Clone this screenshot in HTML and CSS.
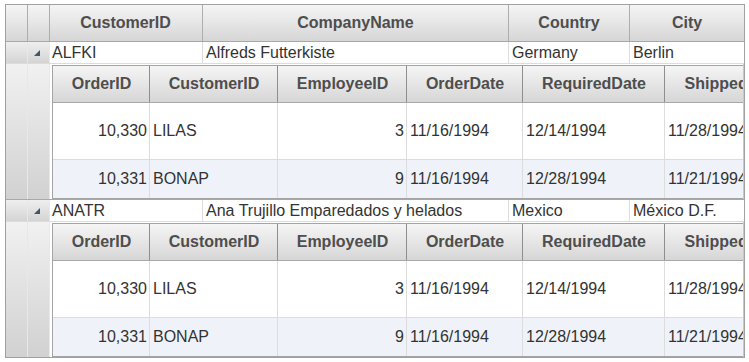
FILE: index.html
```html
<!DOCTYPE html>
<html lang="en">
<head>
    <meta charset="UTF-8">
    <title>Customers and Orders</title>
    <link rel="stylesheet" href="styles.css">
</head>
<body>
    <div class="grid">
        <div class="row head">
            <div class="ind"></div>
            <div class="ind"></div>
            <div class="cell c-cust">CustomerID</div>
            <div class="cell c-comp">CompanyName</div>
            <div class="cell c-country">Country</div>
            <div class="cell c-city">City</div>
        </div>

        <div class="row group">
            <div class="ind"></div>
            <div class="ind"><svg class="expander" width="7" height="6" viewBox="0 0 7 6"><polygon points="6,0 6,6 0,6" fill="#3b5870"/></svg></div>
            <div class="cell c-cust">ALFKI</div>
            <div class="cell c-comp">Alfreds Futterkiste</div>
            <div class="cell c-country">Germany</div>
            <div class="cell c-city">Berlin</div>
        </div>
        <div class="row detail">
            <div class="ind"></div>
            <div class="ind"></div>
            <div class="nest-wrap">
                <div class="nested">
                    <div class="nrow nhead">
                        <div class="ncell n-order">OrderID</div>
                        <div class="ncell n-cust">CustomerID</div>
                        <div class="ncell n-emp">EmployeeID</div>
                        <div class="ncell n-odate">OrderDate</div>
                        <div class="ncell n-rdate">RequiredDate</div>
                        <div class="ncell n-sdate">ShippedDate</div>
                    </div>
                    <div class="nrow tall">
                        <div class="ncell n-order num">10,330</div>
                        <div class="ncell n-cust">LILAS</div>
                        <div class="ncell n-emp num">3</div>
                        <div class="ncell n-odate">11/16/1994</div>
                        <div class="ncell n-rdate">12/14/1994</div>
                        <div class="ncell n-sdate">11/28/1994</div>
                    </div>
                    <div class="nrow alt">
                        <div class="ncell n-order num">10,331</div>
                        <div class="ncell n-cust">BONAP</div>
                        <div class="ncell n-emp num">9</div>
                        <div class="ncell n-odate">11/16/1994</div>
                        <div class="ncell n-rdate">12/28/1994</div>
                        <div class="ncell n-sdate">11/21/1994</div>
                    </div>
                </div>
            </div>
        </div>

        <div class="row group">
            <div class="ind"></div>
            <div class="ind"><svg class="expander" width="7" height="6" viewBox="0 0 7 6"><polygon points="6,0 6,6 0,6" fill="#3b5870"/></svg></div>
            <div class="cell c-cust">ANATR</div>
            <div class="cell c-comp">Ana Trujillo Emparedados y helados</div>
            <div class="cell c-country">Mexico</div>
            <div class="cell c-city">México D.F.</div>
        </div>
        <div class="row detail">
            <div class="ind"></div>
            <div class="ind"></div>
            <div class="nest-wrap">
                <div class="nested">
                    <div class="nrow nhead">
                        <div class="ncell n-order">OrderID</div>
                        <div class="ncell n-cust">CustomerID</div>
                        <div class="ncell n-emp">EmployeeID</div>
                        <div class="ncell n-odate">OrderDate</div>
                        <div class="ncell n-rdate">RequiredDate</div>
                        <div class="ncell n-sdate">ShippedDate</div>
                    </div>
                    <div class="nrow tall">
                        <div class="ncell n-order num">10,330</div>
                        <div class="ncell n-cust">LILAS</div>
                        <div class="ncell n-emp num">3</div>
                        <div class="ncell n-odate">11/16/1994</div>
                        <div class="ncell n-rdate">12/14/1994</div>
                        <div class="ncell n-sdate">11/28/1994</div>
                    </div>
                    <div class="nrow alt">
                        <div class="ncell n-order num">10,331</div>
                        <div class="ncell n-cust">BONAP</div>
                        <div class="ncell n-emp num">9</div>
                        <div class="ncell n-odate">11/16/1994</div>
                        <div class="ncell n-rdate">12/28/1994</div>
                        <div class="ncell n-sdate">11/21/1994</div>
                    </div>
                </div>
            </div>
        </div>
    </div>
</body>
</html>
```

FILE: styles.css
```css
* {
    margin: 0;
    padding: 0;
    box-sizing: border-box;
}

body {
    font-family: "Liberation Sans", Arial, sans-serif;
    font-size: 16px;
    color: #333;
    background: white;
}

.grid {
    margin: 4px 0 0 5px;
    width: 740px;
    height: 354px;
    border: 1px solid #a0a0a0;
    overflow: hidden;
}

.row {
    display: flex;
}

.ind {
    flex: none;
    width: 22px;
    border-right: 1px solid #e8e8e8;
}

.cell {
    flex: none;
    border-right: 1px solid #dcdcdc;
    padding: 0 3px;
    white-space: nowrap;
    overflow: hidden;
}

.c-cust { width: 153px; padding-left: 2px; }
.c-comp { width: 306px; }
.c-country { width: 121px; }
.c-city { flex: 1; border-right: none; }

/* top header */
.head {
    height: 37px;
    border-bottom: 1px solid #a8a8a8;
}

.head .ind,
.head .cell {
    background: linear-gradient(#f5f5f5, #d6d6d6);
    border-right: 1px solid #adadad;
}

.head .cell {
    display: flex;
    align-items: center;
    justify-content: center;
    font-weight: bold;
    color: #4e4e4e;
}

.head .c-city {
    border-right: none;
}

/* group rows */
.group {
    height: 22px;
    border-bottom: 1px solid #dcdcdc;
    line-height: 21px;
}

.group .ind {
    background: linear-gradient(#efefef, #d4d4d4);
}

.expander {
    display: block;
    margin: 8px 0 0 6px;
}

/* detail rows holding the nested orders */
.detail {
    height: 136px;
    border-bottom: 1px solid #a8a8a8;
}

.detail .ind {
    background: linear-gradient(#f1f1f1, #d1d1d1);
}

.nest-wrap {
    flex: 1;
    overflow: hidden;
    padding: 1px 0 0 2px;
    border-right: 1px solid #c8c8c8;
}

.nested {
    width: 800px;
    border: 1px solid #a4a4a4;
    border-right: none;
}

.nrow {
    display: flex;
    height: 38px;
    align-items: stretch;
}

.nrow.tall {
    height: 57px;
    border-bottom: 1px solid #dcdcdc;
}

.nrow.alt {
    background: #eff3f9;
}

.ncell {
    flex: none;
    display: flex;
    align-items: center;
    padding: 0 2px 0 3px;
    border-right: 1px solid #dcdcdc;
    white-space: nowrap;
}

.ncell.num {
    justify-content: flex-end;
}

.n-order { width: 97px; }
.n-cust { width: 128px; }
.n-emp { width: 129px; }
.n-odate { width: 116px; }
.n-rdate { width: 142px; }
.n-sdate { width: 137px; }

.nhead {
    height: 37px;
    border-bottom: 1px solid #a8a8a8;
}

.nhead .ncell {
    justify-content: center;
    background: linear-gradient(#f5f5f5, #d6d6d6);
    border-right: 1px solid #8e8e8e;
    font-weight: bold;
    color: #4e4e4e;
}
```
